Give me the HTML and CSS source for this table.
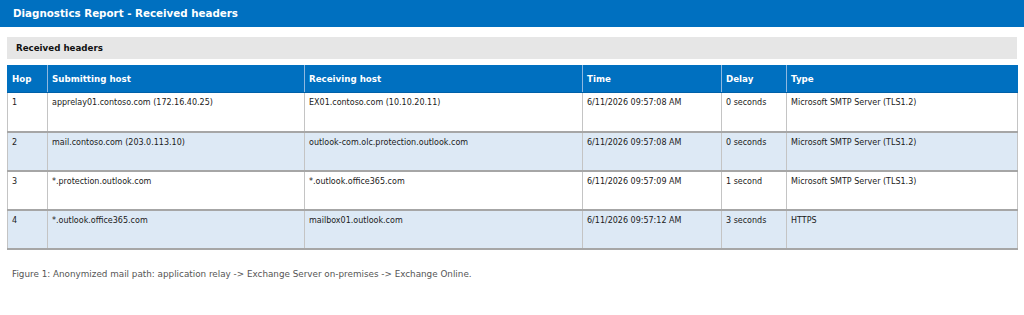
FILE: index.html
```html
<!DOCTYPE html>
<html>
<head>
<meta charset="utf-8">
<link rel="stylesheet" href="styles.css">
</head>
<body>
<div class="topbar">Diagnostics Report - Received headers</div>
<div class="content">
  <div class="section">Received headers</div>
  <table class="hops">
    <colgroup>
      <col class="c-hop"><col class="c-sub"><col class="c-rec"><col class="c-time"><col class="c-delay"><col class="c-type">
    </colgroup>
    <thead>
      <tr><th>Hop</th><th>Submitting host</th><th>Receiving host</th><th>Time</th><th>Delay</th><th>Type</th></tr>
    </thead>
    <tbody>
      <tr><td>1</td><td>apprelay01.contoso.com (172.16.40.25)</td><td>EX01.contoso.com (10.10.20.11)</td><td>6/11/2026 09:57:08 AM</td><td>0 seconds</td><td>Microsoft SMTP Server (TLS1.2)</td></tr>
      <tr class="alt"><td>2</td><td>mail.contoso.com (203.0.113.10)</td><td>outlook-com.olc.protection.outlook.com</td><td>6/11/2026 09:57:08 AM</td><td>0 seconds</td><td>Microsoft SMTP Server (TLS1.2)</td></tr>
      <tr><td>3</td><td>*.protection.outlook.com</td><td>*.outlook.office365.com</td><td>6/11/2026 09:57:09 AM</td><td>1 second</td><td>Microsoft SMTP Server (TLS1.3)</td></tr>
      <tr class="alt"><td>4</td><td>*.outlook.office365.com</td><td>mailbox01.outlook.com</td><td>6/11/2026 09:57:12 AM</td><td>3 seconds</td><td>HTTPS</td></tr>
    </tbody>
  </table>
  <p class="caption">Figure 1: Anonymized mail path: application relay -&gt; Exchange Server on-premises -&gt; Exchange Online.</p>
</div>
</body>
</html>
```
FILE: styles.css
```css
html, body {
  margin: 0;
  padding: 0;
  background: #ffffff;
  font-family: "DejaVu Sans", Verdana, sans-serif;
  color: #1a1a1a;
}
.topbar {
  background: #0070c0;
  color: #ffffff;
  font-weight: bold;
  font-size: 10.3px;
  height: 27px;
  line-height: 26px;
  padding-left: 13px;
}
.content {
  padding: 10px 7px 0 7px;
}
.section {
  background: #e6e6e6;
  height: 22px;
  line-height: 23px;
  font-size: 8.7px;
  font-weight: bold;
  padding-left: 9px;
  color: #111;
}
.hops {
  margin-top: 6px;
  width: 1010px;
  border-collapse: collapse;
  table-layout: fixed;
  font-size: 8px;
}
.c-hop { width: 40px; }
.c-sub { width: 257px; }
.c-rec { width: 278px; }
.c-time { width: 139px; }
.c-delay { width: 65px; }
.c-type { width: 231px; }
.hops th {
  background: #0070c0;
  color: #ffffff;
  font-weight: bold;
  font-size: 8.7px;
  text-align: left;
  height: 27px;
  padding: 0 4px;
  border-left: 1px solid #8fb8e0;
  border-bottom: 1px solid #0060a8;
}
.hops th:first-child { border-left: 1px solid #0070c0; }
.hops td {
  height: 39px;
  vertical-align: top;
  padding: 5px 4px 0 4px;
  border: 1px solid #c4c4c4;
  border-bottom: 2px solid #a6a6a6;
  box-sizing: border-box;
}
.hops tr.alt td { background: #dde9f5; }
.caption {
  margin: 19px 0 0 5px;
  font-size: 8.8px;
  color: #555555;
}
```
